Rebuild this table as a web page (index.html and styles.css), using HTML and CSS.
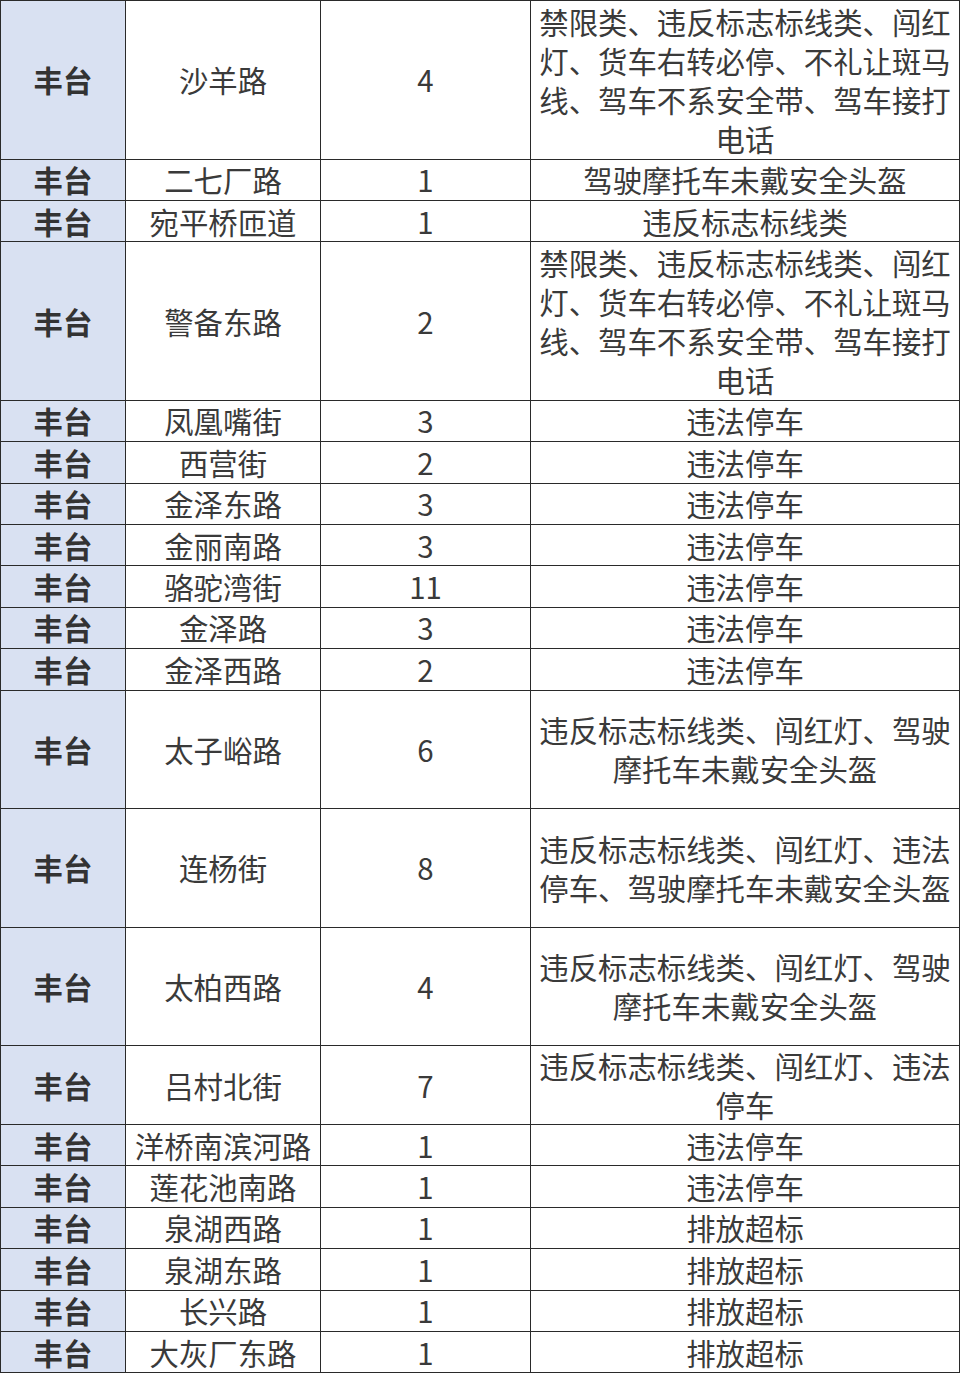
FILE: index.html
```html
<!DOCTYPE html>
<html lang="zh-CN">
<head>
<meta charset="utf-8">
<link rel="stylesheet" href="styles.css">
</head>
<body>
<table class="grid">
<colgroup><col class="c1"><col class="c2"><col class="c3"><col class="c4"></colgroup>
<tbody>
<tr class="r4"><td class="dist">丰台</td><td>沙羊路</td><td>4</td><td>禁限类、违反标志标线类、闯红灯、货车右转必停、不礼让斑马线、驾车不系安全带、驾车接打电话</td></tr>
<tr class="r1"><td class="dist">丰台</td><td>二七厂路</td><td>1</td><td>驾驶摩托车未戴安全头盔</td></tr>
<tr class="r1"><td class="dist">丰台</td><td>宛平桥匝道</td><td>1</td><td>违反标志标线类</td></tr>
<tr class="r4"><td class="dist">丰台</td><td>警备东路</td><td>2</td><td>禁限类、违反标志标线类、闯红灯、货车右转必停、不礼让斑马线、驾车不系安全带、驾车接打电话</td></tr>
<tr class="r1"><td class="dist">丰台</td><td>凤凰嘴街</td><td>3</td><td>违法停车</td></tr>
<tr class="r1"><td class="dist">丰台</td><td>西营街</td><td>2</td><td>违法停车</td></tr>
<tr class="r1"><td class="dist">丰台</td><td>金泽东路</td><td>3</td><td>违法停车</td></tr>
<tr class="r1"><td class="dist">丰台</td><td>金丽南路</td><td>3</td><td>违法停车</td></tr>
<tr class="r1"><td class="dist">丰台</td><td>骆驼湾街</td><td>11</td><td>违法停车</td></tr>
<tr class="r1"><td class="dist">丰台</td><td>金泽路</td><td>3</td><td>违法停车</td></tr>
<tr class="r1"><td class="dist">丰台</td><td>金泽西路</td><td>2</td><td>违法停车</td></tr>
<tr class="r3"><td class="dist">丰台</td><td>太子峪路</td><td>6</td><td>违反标志标线类、闯红灯、驾驶摩托车未戴安全头盔</td></tr>
<tr class="r3"><td class="dist">丰台</td><td>连杨街</td><td>8</td><td>违反标志标线类、闯红灯、违法停车、驾驶摩托车未戴安全头盔</td></tr>
<tr class="r3"><td class="dist">丰台</td><td>太柏西路</td><td>4</td><td>违反标志标线类、闯红灯、驾驶摩托车未戴安全头盔</td></tr>
<tr class="r2"><td class="dist">丰台</td><td>吕村北街</td><td>7</td><td>违反标志标线类、闯红灯、违法停车</td></tr>
<tr class="r1"><td class="dist">丰台</td><td>洋桥南滨河路</td><td>1</td><td>违法停车</td></tr>
<tr class="r1"><td class="dist">丰台</td><td>莲花池南路</td><td>1</td><td>违法停车</td></tr>
<tr class="r1"><td class="dist">丰台</td><td>泉湖西路</td><td>1</td><td>排放超标</td></tr>
<tr class="r1"><td class="dist">丰台</td><td>泉湖东路</td><td>1</td><td>排放超标</td></tr>
<tr class="r1"><td class="dist">丰台</td><td>长兴路</td><td>1</td><td>排放超标</td></tr>
<tr class="r1"><td class="dist">丰台</td><td>大灰厂东路</td><td>1</td><td>排放超标</td></tr>
</tbody>
</table>
</body>
</html>
```
FILE: styles.css
```css
html, body {
  margin: 0;
  padding: 0;
  background: #ffffff;
}

.grid {
  border-collapse: collapse;
  table-layout: fixed;
  width: 959px;
  font-family: "Noto Sans CJK SC", "Noto Sans", sans-serif;
  font-size: 29.4px;
  line-height: 39px;
  color: #3a3a3a;
}

.c1 { width: 125px; }
.c2 { width: 195px; }
.c3 { width: 210px; }
.c4 { width: 429px; }

.grid td {
  border: 1px solid #2a2a2a;
  padding: 0 5px;
  text-align: center;
  vertical-align: middle;
  overflow: hidden;
}

.grid td.dist {
  background: #d9e1f2;
  font-weight: 700;
  color: #333333;
}

.r1 td { height: 40.4px; }
.r2 td { height: 78px; }
.r3 td { height: 117.5px; }
.r4 td { height: 157.5px; }
```
